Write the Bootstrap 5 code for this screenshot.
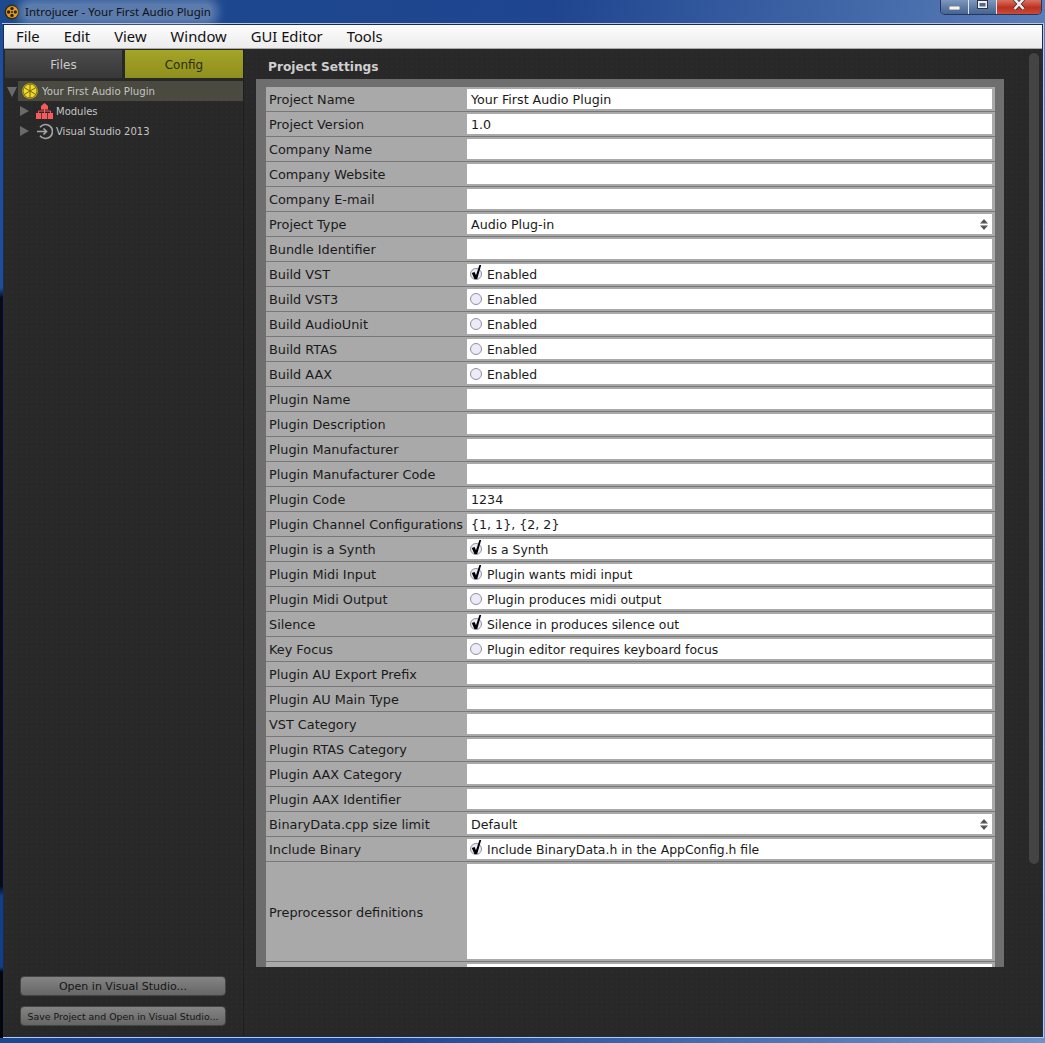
<!DOCTYPE html>
<html lang="en"><head><meta charset="utf-8"><title>Introjucer</title>
<link href="https://cdn.jsdelivr.net/npm/bootstrap@5.3.0/dist/css/bootstrap.min.css" rel="stylesheet">
<style>
html,body{height:1043px;overflow:hidden}
body{width:1045px;font-family:"DejaVu Sans",Verdana,sans-serif;background:linear-gradient(100deg,#1b4a8e 0%,#1f4590 45%,#6f93c6 100%);position:relative}
.ttl{height:24px;padding-left:4px;font-size:11.5px;color:#111;font-family:"Noto Sans","DejaVu Sans",sans-serif}
.ttl-glow{background:rgba(255,255,255,.28);box-shadow:0 0 10px 6px rgba(255,255,255,.28);padding:0 1px;line-height:16px;border-radius:6px}
.winbtns{position:absolute;top:0;left:940px;width:102px;height:15px;border:1px solid #24365c;border-top:0;border-radius:0 0 5px 5px;overflow:hidden}
.wb{width:28px;background:linear-gradient(#7f97bd,#5f7ba7 50%,#47648f);border-right:1px solid #dfe6f0}
.wb-x{flex:1;background:linear-gradient(#d9705f,#bd3020 55%,#c84c38)}
.wrap{height:1013px;margin:0 2px 0 3px;outline:1px solid #b9c9e2;border:1px solid #1a2c55}
.menu{height:24px;background:linear-gradient(#fcfcfc,#ececec);border-bottom:1px solid #aaa;font-size:14.8px;color:#111;padding-left:12px;gap:24px;line-height:23px;font-family:"Noto Sans","DejaVu Sans",sans-serif}
.main{height:988px;background-color:#282828;background-image:radial-gradient(rgba(255,255,255,.018) 1px,transparent 1px);background-size:5px 5px}
.side{width:239px;flex:none}
.tabs{height:29px;margin:1px 0 0 1px;gap:3px}
.tabx{width:117px;font-size:12px;line-height:30px;text-align:center;height:28px}
.tabx-off{background:linear-gradient(#4c4c4c,#383838);color:#ccc}
.tabx-on{width:118px;background:linear-gradient(#a4a428,#8f8f1e);color:#2c2c0a}
.tree{margin-top:2px;font-size:10px;color:#c4c4c4}
.tr{height:20px;line-height:20px;white-space:nowrap}
.tr span{padding-top:2px}
.tr-on{margin-left:14px;background:#4a4a40;padding-left:4px;font-size:10.2px}
.tri{width:0;height:0;flex:none}
.tri-r{border-left:9px solid #6a6a6a;border-top:5.5px solid transparent;border-bottom:5.5px solid transparent;margin:0 7px 0 16px}
.tri-d{position:absolute;left:3px;top:6px;border-top:10px solid #6a6a6a;border-left:5px solid transparent;border-right:5px solid transparent}
.side-ico{margin-right:3px}
.bots{margin:0 0 10px 16px;gap:10px;width:206px}
.gbtn{height:20px;border-radius:4px;border:1px solid #444;background:linear-gradient(#848484,#666);color:#151515;font-size:11px;line-height:17px;text-align:center;padding:0;white-space:nowrap;display:block;width:100%}
.gbtn-s{font-size:9.4px}
.cont{flex:1;border-left:1px solid #1f1f1f;padding-left:12px;position:relative;min-width:0}
.head{height:30px;line-height:37px;font-size:12.2px;font-weight:700;color:#cfcfcf;padding-left:12px}
.panel{width:748px;height:888px;background:#6e6e6e;padding:8px 9px 0 10px;overflow:hidden}
.rowx{height:25px;background:#a9a9a9;border-bottom:1px solid #777;padding:2px 3px 2px 0;color:#1a1a1a;box-sizing:border-box}
.rowx-tall{height:100px}
.lab{width:201px;flex:none;padding-left:3px;white-space:nowrap;line-height:22px;font-size:12.85px}
.fld{flex:1;background:#fff;line-height:22px;padding-left:4px;color:#1a1a1a;white-space:nowrap;position:relative;font-size:12.65px}
.rowx-tall .lab{line-height:98px}
.chk{padding-left:3px;font-size:12.4px}
.chk svg{margin:4px 5px 0 0;overflow:visible;flex:none}
.upd{position:absolute;right:4px;top:5px}
.sb{position:absolute;left:785px;top:4px;width:10px;height:811px;background:#444;border-radius:5px}
.edgel{position:absolute;left:0;top:24px;width:3px;height:1014px;background:linear-gradient(#1d4f97 0,#1d4f97 26%,#0a0a12 27%,#0a0a12 85%,#123e85 86%,#123e85 93%,#060606 93.5%)}
</style></head>
<body>
<svg width="0" height="0" class="position-absolute"><defs>
 <symbol id="rad" viewBox="0 0 12 12"><circle cx="6" cy="6" r="5.5" fill="#ecebf7" stroke="#8f8fa0"/></symbol>
 <path id="tick" d="M1.8 5L4.6 4L6 7.2L9.4 -3L11.2 -3L7.2 11L4.4 11Z" fill="#000"/>
</defs></svg>
<div class="ttl d-flex align-items-center gap-1">
 <svg width="16" height="16" viewBox="0 0 16 16"><circle cx="8" cy="8" r="7.5" fill="#3a2a14"/><circle cx="8" cy="8" r="6" fill="#e09a20"/><g fill="#2a1c0c"><circle cx="8" cy="4.6" r="1.7"/><circle cx="8" cy="11.4" r="1.7"/><circle cx="4.6" cy="8" r="1.7"/><circle cx="11.4" cy="8" r="1.7"/><circle cx="8" cy="8" r="1"/></g></svg>
 <span class="ttl-glow">Introjucer - Your First Audio Plugin</span>
</div>
<div class="winbtns d-flex">
 <div class="wb d-flex align-items-end justify-content-center pb-1"><svg width="11" height="4"><rect width="11" height="4" fill="#f4f4f4" stroke="#334" stroke-width=".6"/></svg></div>
 <div class="wb d-flex align-items-start justify-content-center"><svg width="11" height="9"><rect x=".5" y=".5" width="10" height="8" fill="#f0f0f0" stroke="#334"/><rect x="2.5" y="3" width="6" height="3.5" fill="#4a6796"/></svg></div>
 <div class="wb-x d-flex align-items-start justify-content-center"><svg width="12" height="10" viewBox="0 0 12 10"><path d="M1.5 -1L10.5 9M10.5 -1L1.5 9" stroke="#3c2a2a" stroke-width="4"/><path d="M1.5 -1L10.5 9M10.5 -1L1.5 9" stroke="#eee" stroke-width="2.6"/></svg></div>
</div>
<div class="edgel"></div>
<div class="wrap d-flex flex-column">
 <div class="menu d-flex flex-none"><span>File</span><span>Edit</span><span>View</span><span>Window</span><span>GUI Editor</span><span>Tools</span></div>
 <div class="main d-flex">
  <div class="side d-flex flex-column">
   <div class="tabs d-flex"><div class="tabx tabx-off">Files</div><div class="tabx tabx-on">Config</div></div>
   <div class="tree flex-grow-1 position-relative">
    <div class="tri tri-d"></div>
    <div class="tr tr-on d-flex align-items-center gap-1">
     <svg width="16" height="16" viewBox="0 0 16 16" class="flex-none"><circle cx="8" cy="8" r="7.8" fill="#efd828"/><g stroke="#77680f" stroke-width="1" fill="none"><circle cx="8" cy="8" r="7"/><path d="M8 1v14M2 4.5l12 7M14 4.5l-12 7"/></g></svg>
     <span>Your First Audio Plugin</span>
    </div>
    <div class="tr d-flex align-items-center">
     <div class="tri tri-r"></div>
     <svg width="17" height="16" viewBox="0 0 17 16" class="flex-none side-ico"><g fill="#f75a5a"><path d="M8.5 0l3.5 3v3.5H5V3z"/><rect x="0" y="10" width="5.2" height="6"/><rect x="5.9" y="10" width="5.2" height="6"/><rect x="11.8" y="10" width="5.2" height="6"/></g><path d="M8.5 6v4M2.5 10V8h12v2" stroke="#f75a5a" fill="none"/></svg>
     <span>Modules</span>
    </div>
    <div class="tr d-flex align-items-center">
     <div class="tri tri-r"></div>
     <svg width="17" height="17" viewBox="0 0 17 17" class="flex-none side-ico"><path d="M4 4.2A7 7 0 1 1 4 12.8" fill="none" stroke="#a4a4a4" stroke-width="1.7"/><path d="M1 8.5h9M7.5 5.5l3 3-3 3" fill="none" stroke="#a4a4a4" stroke-width="1.7"/></svg>
     <span>Visual Studio 2013</span>
    </div>
   </div>
   <div class="bots d-flex flex-column">
    <button class="gbtn" type="button">Open in Visual Studio...</button>
    <button class="gbtn gbtn-s" type="button">Save Project and Open in Visual Studio...</button>
   </div>
  </div>
  <div class="cont">
   <div class="head">Project Settings</div>
   <div class="panel" id="pnl">
    <div class="rowx d-flex"><div class="lab">Project Name</div><div class="fld">Your First Audio Plugin</div></div>
    <div class="rowx d-flex"><div class="lab">Project Version</div><div class="fld">1.0</div></div>
    <div class="rowx d-flex"><div class="lab">Company Name</div><div class="fld"></div></div>
    <div class="rowx d-flex"><div class="lab">Company Website</div><div class="fld"></div></div>
    <div class="rowx d-flex"><div class="lab">Company E-mail</div><div class="fld"></div></div>
    <div class="rowx d-flex"><div class="lab">Project Type</div><div class="fld">Audio Plug-in<svg class="upd" width="8" height="11" viewBox="0 0 8 11"><path d="M4 0l4 4.5H0zM4 11L0 6.5h8z" fill="#555"/></svg></div></div>
    <div class="rowx d-flex"><div class="lab">Bundle Identifier</div><div class="fld"></div></div>
    <div class="rowx d-flex"><div class="lab">Build VST</div><div class="fld chk d-flex"><svg width="12" height="12"><use href="#rad"/><use href="#tick"/></svg>Enabled</div></div>
    <div class="rowx d-flex"><div class="lab">Build VST3</div><div class="fld chk d-flex"><svg width="12" height="12"><use href="#rad"/></svg>Enabled</div></div>
    <div class="rowx d-flex"><div class="lab">Build AudioUnit</div><div class="fld chk d-flex"><svg width="12" height="12"><use href="#rad"/></svg>Enabled</div></div>
    <div class="rowx d-flex"><div class="lab">Build RTAS</div><div class="fld chk d-flex"><svg width="12" height="12"><use href="#rad"/></svg>Enabled</div></div>
    <div class="rowx d-flex"><div class="lab">Build AAX</div><div class="fld chk d-flex"><svg width="12" height="12"><use href="#rad"/></svg>Enabled</div></div>
    <div class="rowx d-flex"><div class="lab">Plugin Name</div><div class="fld"></div></div>
    <div class="rowx d-flex"><div class="lab">Plugin Description</div><div class="fld"></div></div>
    <div class="rowx d-flex"><div class="lab">Plugin Manufacturer</div><div class="fld"></div></div>
    <div class="rowx d-flex"><div class="lab">Plugin Manufacturer Code</div><div class="fld"></div></div>
    <div class="rowx d-flex"><div class="lab">Plugin Code</div><div class="fld">1234</div></div>
    <div class="rowx d-flex"><div class="lab">Plugin Channel Configurations</div><div class="fld">{1, 1}, {2, 2}</div></div>
    <div class="rowx d-flex"><div class="lab">Plugin is a Synth</div><div class="fld chk d-flex"><svg width="12" height="12"><use href="#rad"/><use href="#tick"/></svg>Is a Synth</div></div>
    <div class="rowx d-flex"><div class="lab">Plugin Midi Input</div><div class="fld chk d-flex"><svg width="12" height="12"><use href="#rad"/><use href="#tick"/></svg>Plugin wants midi input</div></div>
    <div class="rowx d-flex"><div class="lab">Plugin Midi Output</div><div class="fld chk d-flex"><svg width="12" height="12"><use href="#rad"/></svg>Plugin produces midi output</div></div>
    <div class="rowx d-flex"><div class="lab">Silence</div><div class="fld chk d-flex"><svg width="12" height="12"><use href="#rad"/><use href="#tick"/></svg>Silence in produces silence out</div></div>
    <div class="rowx d-flex"><div class="lab">Key Focus</div><div class="fld chk d-flex"><svg width="12" height="12"><use href="#rad"/></svg>Plugin editor requires keyboard focus</div></div>
    <div class="rowx d-flex"><div class="lab">Plugin AU Export Prefix</div><div class="fld"></div></div>
    <div class="rowx d-flex"><div class="lab">Plugin AU Main Type</div><div class="fld"></div></div>
    <div class="rowx d-flex"><div class="lab">VST Category</div><div class="fld"></div></div>
    <div class="rowx d-flex"><div class="lab">Plugin RTAS Category</div><div class="fld"></div></div>
    <div class="rowx d-flex"><div class="lab">Plugin AAX Category</div><div class="fld"></div></div>
    <div class="rowx d-flex"><div class="lab">Plugin AAX Identifier</div><div class="fld"></div></div>
    <div class="rowx d-flex"><div class="lab">BinaryData.cpp size limit</div><div class="fld">Default<svg class="upd" width="8" height="11" viewBox="0 0 8 11"><path d="M4 0l4 4.5H0zM4 11L0 6.5h8z" fill="#555"/></svg></div></div>
    <div class="rowx d-flex"><div class="lab">Include Binary</div><div class="fld chk d-flex"><svg width="12" height="12"><use href="#rad"/><use href="#tick"/></svg>Include BinaryData.h in the AppConfig.h file</div></div>
    <div class="rowx rowx-tall d-flex"><div class="lab">Preprocessor definitions</div><div class="fld"></div></div>
    <div class="rowx d-flex"><div class="lab"></div><div class="fld"></div></div>
   </div>
   <div class="sb"></div>
  </div>
 </div>
</div>
</body></html>
